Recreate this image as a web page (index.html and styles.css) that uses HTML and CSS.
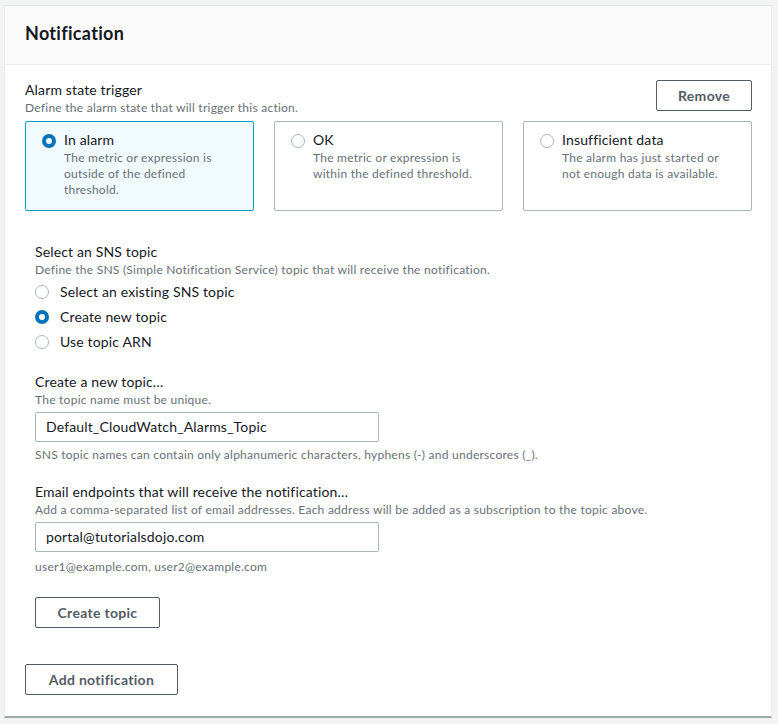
FILE: index.html
```html
<!DOCTYPE html>
<html lang="en">
<head>
<meta charset="utf-8">
<title>Notification</title>
<link rel="stylesheet" href="styles.css">
</head>
<body>
<div class="panel">
  <div class="panel-header"><h2 class="title">Notification</h2></div>
  <div class="panel-body">
    <div class="trigger-row">
      <div class="field-head">
        <div class="label">Alarm state trigger</div>
        <div class="desc">Define the alarm state that will trigger this action.</div>
      </div>
      <button class="btn">Remove</button>
    </div>
    <div class="tiles">
      <div class="tile selected">
        <span class="radio checked"></span>
        <div class="tile-text">
          <div class="tile-label">In alarm</div>
          <div class="tile-desc">The metric or expression is outside of the defined threshold.</div>
        </div>
      </div>
      <div class="tile">
        <span class="radio"></span>
        <div class="tile-text">
          <div class="tile-label">OK</div>
          <div class="tile-desc">The metric or expression is within the defined threshold.</div>
        </div>
      </div>
      <div class="tile">
        <span class="radio"></span>
        <div class="tile-text">
          <div class="tile-label">Insufficient data</div>
          <div class="tile-desc">The alarm has just started or not enough data is available.</div>
        </div>
      </div>
    </div>

    <div class="sns">
      <div class="label">Select an SNS topic</div>
      <div class="desc">Define the SNS (Simple Notification Service) topic that will receive the notification.</div>
      <div class="radio-group">
        <div class="radio-row"><span class="radio"></span><span>Select an existing SNS topic</span></div>
        <div class="radio-row"><span class="radio checked"></span><span>Create new topic</span></div>
        <div class="radio-row"><span class="radio"></span><span>Use topic ARN</span></div>
      </div>

      <div class="field first">
        <div class="label">Create a new topic…</div>
        <div class="desc">The topic name must be unique.</div>
        <div class="input">Default_CloudWatch_Alarms_Topic</div>
        <div class="hint">SNS topic names can contain only alphanumeric characters, hyphens (-) and underscores (_).</div>
      </div>

      <div class="field second">
        <div class="label">Email endpoints that will receive the notification…</div>
        <div class="desc">Add a comma-separated list of email addresses. Each address will be added as a subscription to the topic above.</div>
        <div class="input">portal@tutorialsdojo.com</div>
        <div class="hint">user1@example.com, user2@example.com</div>
      </div>

      <button class="btn create">Create topic</button>
    </div>

    <button class="btn add">Add notification</button>
  </div>
</div>
</body>
</html>
```

FILE: styles.css
```css
* { box-sizing: border-box; }
html, body { margin: 0; padding: 0; }
body {
  background: #f2f3f3;
  font-family: Lato, "Open Sans", "Liberation Sans", sans-serif;
  color: #16191f;
  width: 778px;
  height: 724px;
  overflow: hidden;
}
.panel {
  margin: 5px 6px 0 4px;
  background: #fff;
  border: 1px solid #eaeded;
  border-bottom: 2px solid #9ba7a8;
  border-top: 1px solid #e3e6e6;
  height: 713px;
}
.panel-header {
  background: #fafafa;
  border-bottom: 1px solid #eaeded;
  height: 59px;
  padding: 0 20px;
  display: flex;
  align-items: center;
}
.title {
  margin: 0;
  font-size: 18px;
  font-weight: 700;
  line-height: 24px;
  padding-bottom: 4px;
  letter-spacing: 0.3px;
}
.panel-body {
  padding: 15px 19px 20px 20px;
}
.trigger-row {
  display: flex;
  justify-content: space-between;
  align-items: flex-start;
}
.label {
  font-size: 14px;
  line-height: 20px;
  color: #16191f;
  letter-spacing: 0.15px;
}
.desc {
  font-size: 12px;
  line-height: 16px;
  color: #687078;
  letter-spacing: 0.25px;
}
.btn {
  font-family: inherit;
  font-size: 14px;
  font-weight: 700;
  color: #545b64;
  background: #fff;
  border: 1px solid #545b64;
  border-radius: 2px;
  height: 31px;
  padding: 0 20px;
  line-height: 29px;
  letter-spacing: 0.3px;
  cursor: pointer;
}
.trigger-row .btn { width: 96px; }
.tiles {
  display: grid;
  grid-template-columns: repeat(3, 229px);
  column-gap: 20px;
  margin-top: 5px;
}
.tile {
  height: 90px;
  border: 1px solid #aab7b8;
  border-radius: 2px;
  padding: 8px 10px 8px 16px;
  display: flex;
  align-items: flex-start;
  gap: 8px;
}
.tile.selected {
  background: #f1faff;
  border-color: #00a1c9;
}
.tile .radio { margin-top: 4px; }
.tile-label {
  font-size: 14px;
  line-height: 20px;
  letter-spacing: 0.15px;
}
.tile-desc {
  font-size: 12px;
  line-height: 16px;
  color: #687078;
  max-width: 168px;
  letter-spacing: 0.25px;
}
.radio {
  flex: none;
  width: 14px;
  height: 14px;
  border-radius: 50%;
  border: 1.5px solid #aab7b8;
  background: #fff;
  display: inline-block;
}
.radio.checked {
  border: 4px solid #0073bb;
  background: #fff;
}
.sns {
  margin: 31px 0 0 10px;
}
.radio-group {
  margin-top: 1px;
}
.radio-row {
  height: 25px;
  display: flex;
  align-items: center;
  gap: 11px;
  font-size: 14px;
  letter-spacing: 0.15px;
}
.field.first { margin-top: 18px; }
.field.second { margin-top: 19px; }
.input {
  margin-top: 4px;
  width: 344px;
  height: 30px;
  border: 1px solid #aab7b8;
  border-radius: 2px;
  padding: 0 10px;
  font-size: 14px;
  line-height: 28px;
  color: #16191f;
  letter-spacing: 0.15px;
}
.hint {
  margin-top: 5px;
  font-size: 12px;
  line-height: 16px;
  color: #687078;
  letter-spacing: 0.25px;
}
.field.second .hint { margin-top: 7px; }
.btn.create {
  margin-top: 22px;
  width: 125px;
  display: block;
}
.btn.add {
  margin-top: 36px;
  width: 153px;
  display: block;
}
```
